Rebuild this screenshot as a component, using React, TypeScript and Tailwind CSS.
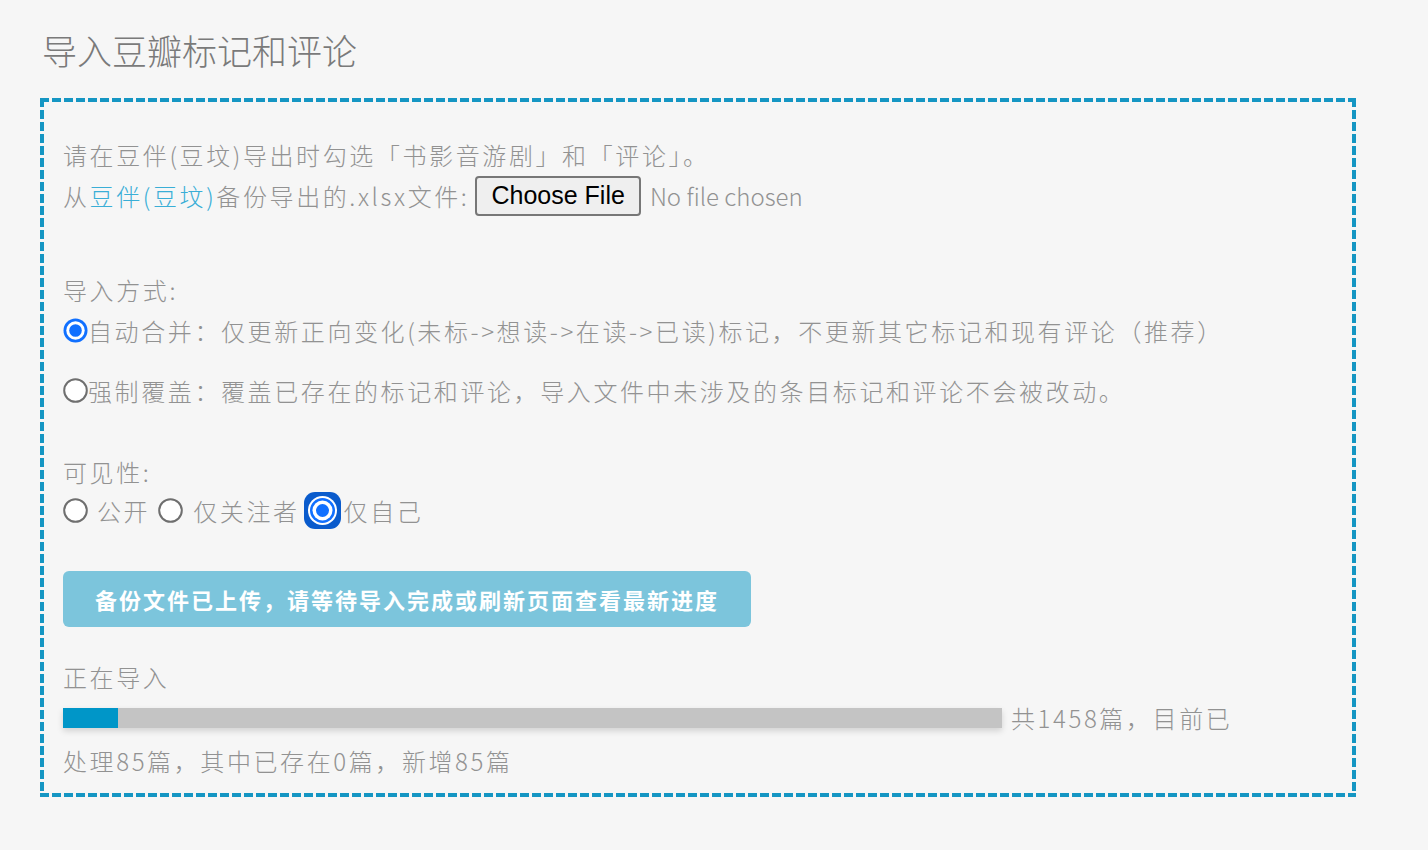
import React from "react";

const font = { fontFamily: '"Helvetica Neue", "Noto Sans CJK SC", sans-serif' };

function Radio({ checked = false, focused = false }: { checked?: boolean; focused?: boolean }) {
  if (focused) {
    return (
      <svg width="37" height="37" viewBox="0 0 37 37" className="inline-block shrink-0">
        <rect x="0" y="0" width="37" height="37" rx="11" fill="#0a5bcc" />
        <circle cx="18.5" cy="18.5" r="14.5" fill="#ffffff" />
        <circle cx="18.5" cy="18.5" r="12.5" fill="#1170ff" />
        <circle cx="18.5" cy="18.5" r="10" fill="#ffffff" />
        <circle cx="18.5" cy="18.5" r="6.5" fill="#1170ff" />
      </svg>
    );
  }
  if (checked) {
    return (
      <svg width="25" height="25" viewBox="0 0 25 25" className="inline-block shrink-0">
        <circle cx="12.5" cy="12.5" r="12" fill="#1170ff" />
        <circle cx="12.5" cy="12.5" r="9.2" fill="#ffffff" />
        <circle cx="12.5" cy="12.5" r="6.3" fill="#1170ff" />
      </svg>
    );
  }
  return (
    <svg width="25" height="25" viewBox="0 0 25 25" className="inline-block shrink-0">
      <circle cx="12.5" cy="12.5" r="11.3" fill="#ffffff" stroke="#6f6f6f" strokeWidth="2" />
    </svg>
  );
}

export default function App() {
  return (
    <div className="min-h-[850px] w-full bg-[#f6f6f6] pl-[40px] pt-[29px] font-light text-[#929292]" style={font}>
      <h1 className="pl-[2px] text-[35px] leading-[42px] font-light text-[#7a7a7a]">导入豆瓣标记和评论</h1>
      <div className="mt-[27px] w-[1316px] bg-no-repeat pl-[23px] pr-[20px] pt-[36px] pb-[16px] text-[24px] tracking-[2.6px] [background-image:repeating-linear-gradient(90deg,#1596c3_0px,#1596c3_9px,transparent_9px,transparent_12px),repeating-linear-gradient(90deg,#1596c3_0px,#1596c3_9px,transparent_9px,transparent_12px),repeating-linear-gradient(180deg,#1596c3_0px,#1596c3_9px,transparent_9px,transparent_12px),repeating-linear-gradient(180deg,#1596c3_0px,#1596c3_9px,transparent_9px,transparent_12px)] [background-size:100%_4px,100%_4px,4px_100%,4px_100%] [background-position:0_0,0_100%,0_0,100%_0]">
        <div className="leading-[41px]">请在豆伴(豆坟)导出时勾选「书影音游剧」和「评论」。</div>
        <div className="flex h-[41px] items-center">
          <span>从</span>
          <span className="text-[#3aaed6]">豆伴(豆坟)</span>
          <span>备份导出的.xlsx文件:</span>
          <span className="ml-[6px] flex h-[40px] items-center rounded-[4px] border-2 border-[#777777] bg-[#efefef] px-[14px] text-[25px] font-normal tracking-normal text-black" style={{ fontFamily: '"Liberation Sans", Arial, sans-serif' }}>
            Choose File
          </span>
          <span className="ml-[9px] tracking-normal">No file chosen</span>
        </div>

        <div className="mt-[53px] leading-[41px]">导入方式:</div>
        <div className="flex h-[41px] items-center">
          <Radio checked />
          <span>自动合并：仅更新正向变化(未标-&gt;想读-&gt;在读-&gt;已读)标记，不更新其它标记和现有评论（推荐）</span>
        </div>
        <div className="mt-[19px] flex h-[41px] items-center">
          <Radio />
          <span>强制覆盖：覆盖已存在的标记和评论，导入文件中未涉及的条目标记和评论不会被改动。</span>
        </div>

        <div className="mt-[40px] leading-[41px]">可见性:</div>
        <div className="-mt-[2px] flex h-[41px] items-center">
          <Radio />
          <span className="ml-[9px]">公开</span>
          <span className="ml-[8px] flex items-center">
            <Radio />
          </span>
          <span className="ml-[10px]">仅关注者</span>
          <span className="ml-[4px] flex items-center">
            <Radio focused />
          </span>
          <span className="ml-[3px]">仅自己</span>
        </div>

        <div className="mt-[40px] flex h-[56px] w-[688px] items-center justify-center rounded-[6px] bg-[#7cc5dc] text-[22px] font-bold tracking-[2px] text-white">
          备份文件已上传，请等待导入完成或刷新页面查看最新进度
        </div>

        <div className="mt-[29px] leading-[41px]">正在导入</div>
        <div className="flex h-[41px] items-center">
          <div className="h-[20px] w-[939px] bg-[#c4c4c4] shadow-[0_3px_6px_rgba(0,0,0,0.15)]">
            <div className="h-full bg-[#0096c8]" style={{ width: `${(85 / 1458) * 100}%` }} />
          </div>
          <span className="ml-[9px]">共1458篇，目前已</span>
        </div>
        <div className="mt-[2px] leading-[41px]">处理85篇，其中已存在0篇，新增85篇</div>
      </div>
    </div>
  );
}
